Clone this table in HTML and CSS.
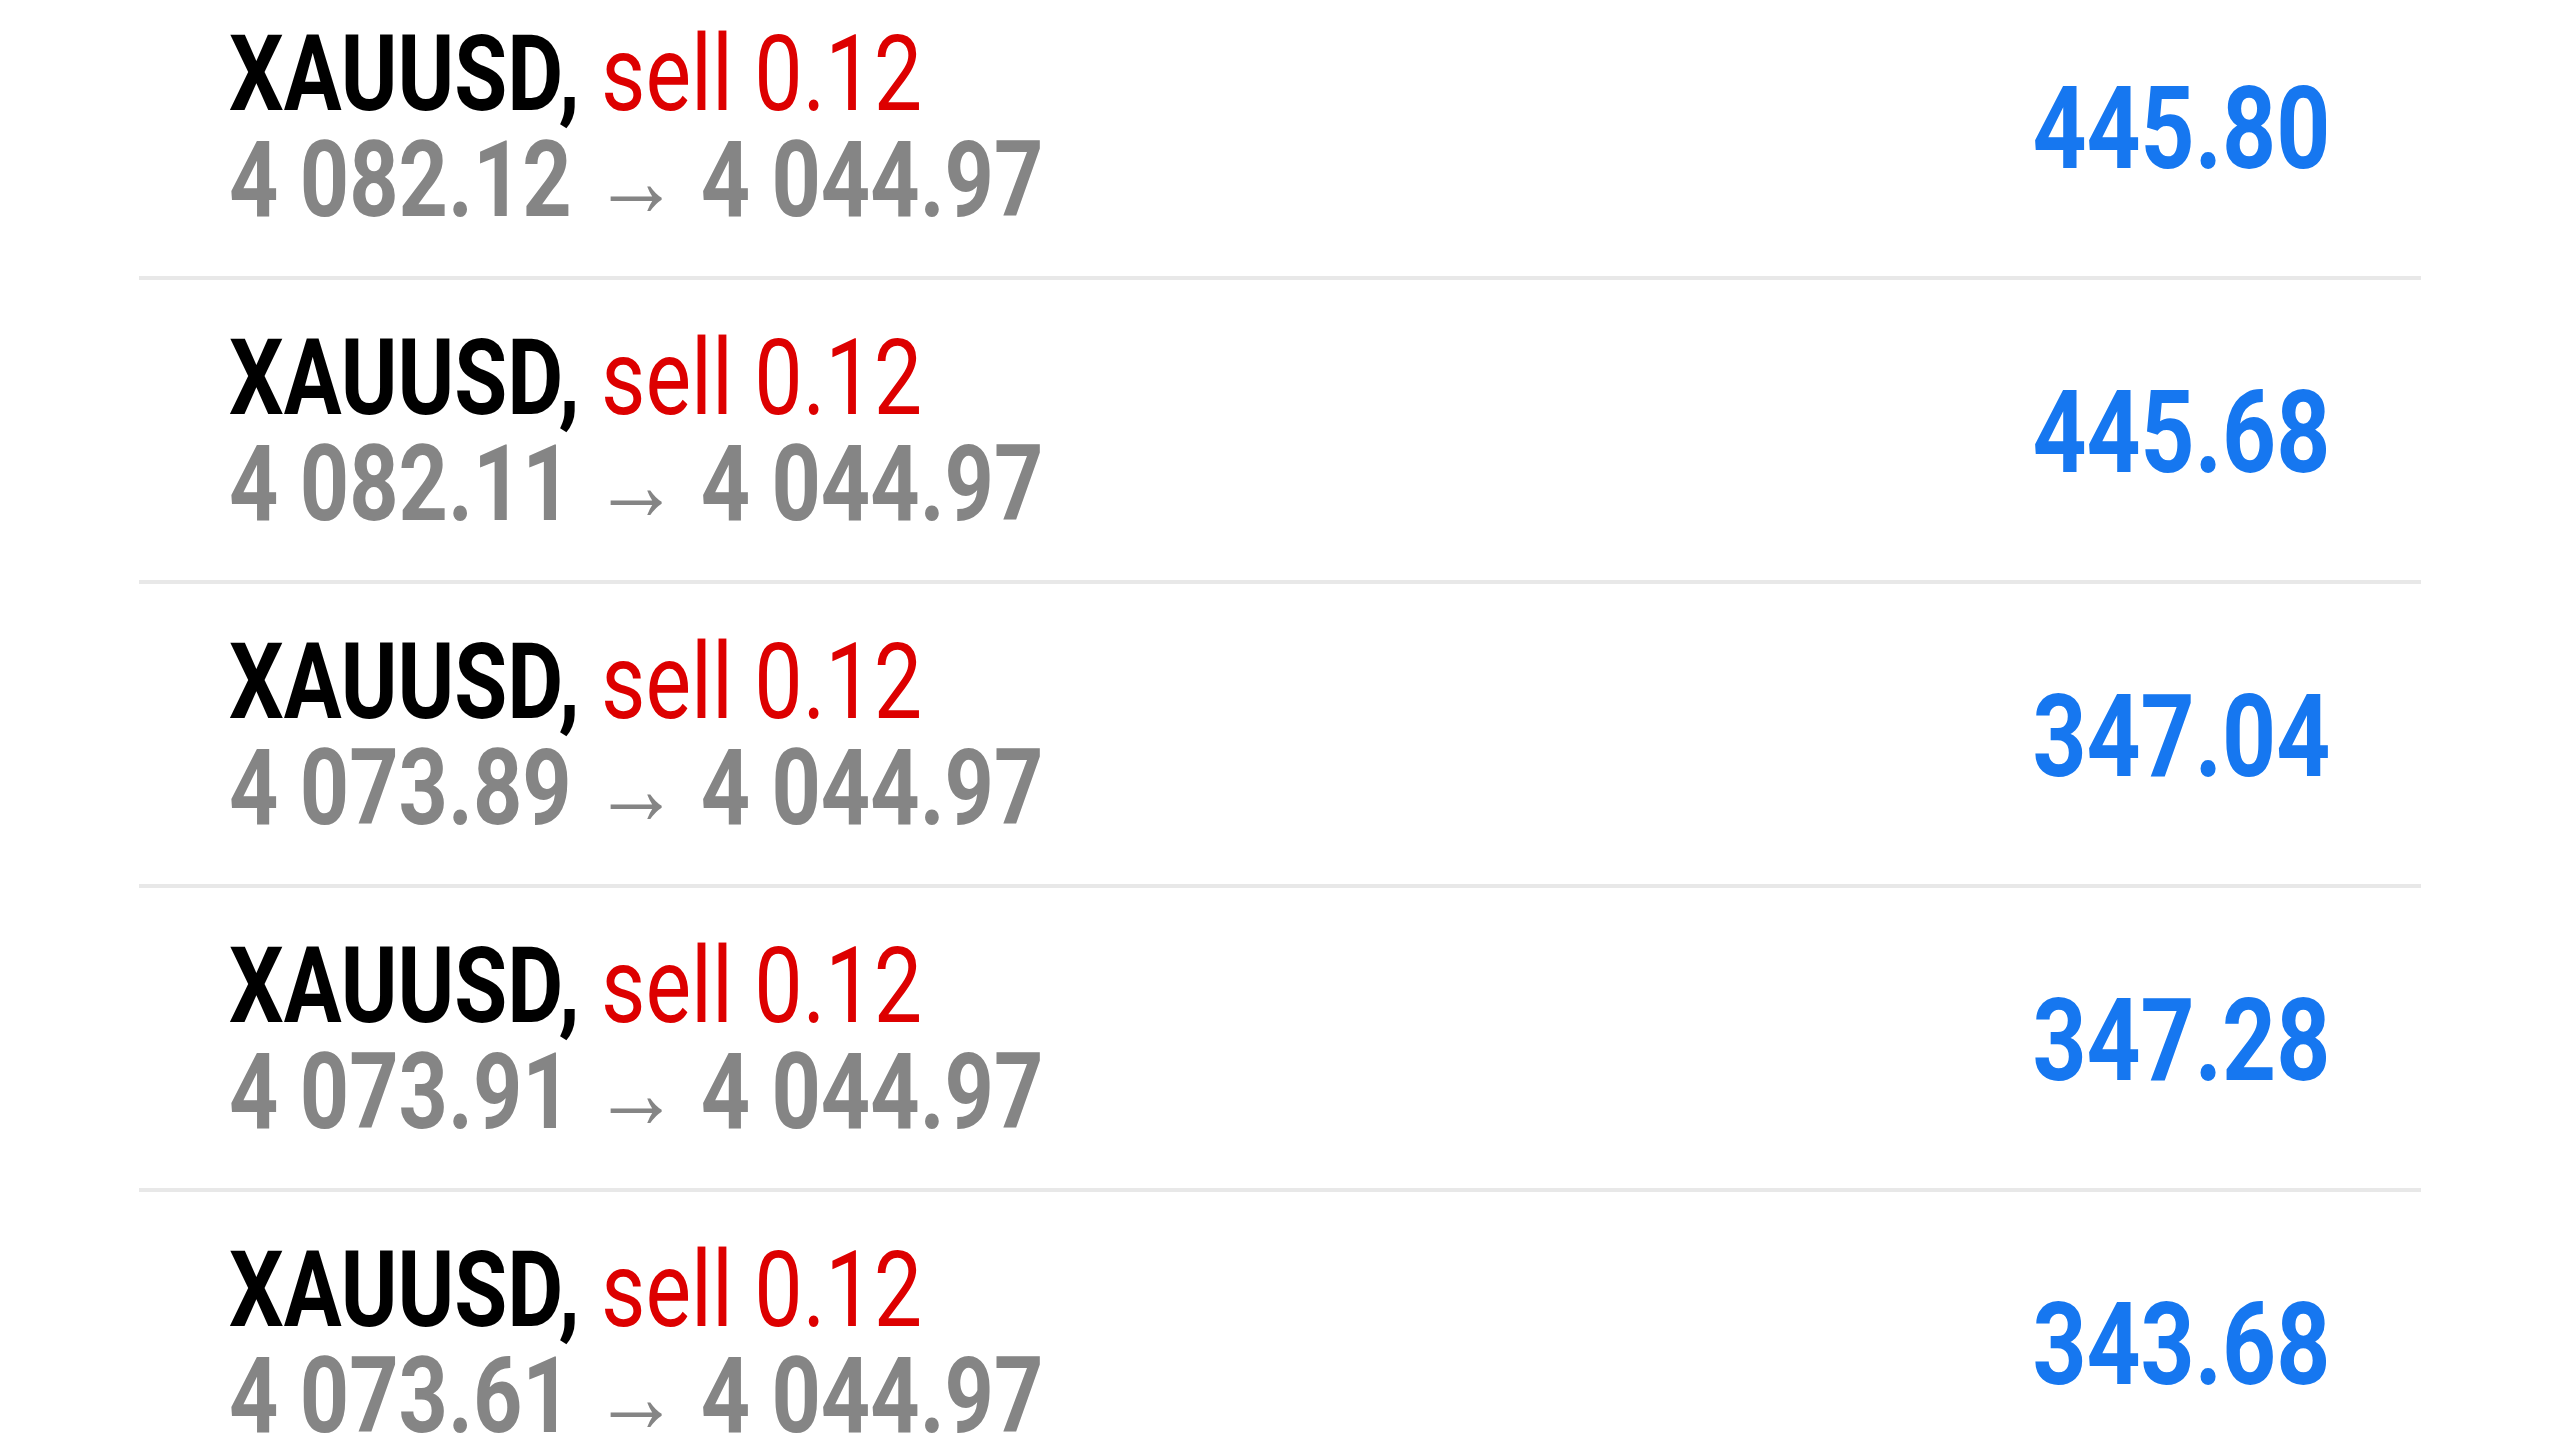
FILE: index.html
```html
<!DOCTYPE html>
<html lang="en">
  <head>
    <meta charset="UTF-8" />
    <meta name="viewport" content="width=device-width, initial-scale=1.0" />
    <title>Positions</title>
    <link rel="stylesheet" href="styles.css">
  </head>
  <body>
    <ul class="positions">
      <li class="position">
        <div class="info">
          <div class="title"><span class="symbol">XAUUSD,</span> <span class="side">sell 0.12</span></div>
          <div class="price">4 082.12 &rarr; 4 044.97</div>
        </div>
        <div class="profit">445.80</div>
      </li>
      <li class="position">
        <div class="info">
          <div class="title"><span class="symbol">XAUUSD,</span> <span class="side">sell 0.12</span></div>
          <div class="price">4 082.11 &rarr; 4 044.97</div>
        </div>
        <div class="profit">445.68</div>
      </li>
      <li class="position">
        <div class="info">
          <div class="title"><span class="symbol">XAUUSD,</span> <span class="side">sell 0.12</span></div>
          <div class="price">4 073.89 &rarr; 4 044.97</div>
        </div>
        <div class="profit">347.04</div>
      </li>
      <li class="position">
        <div class="info">
          <div class="title"><span class="symbol">XAUUSD,</span> <span class="side">sell 0.12</span></div>
          <div class="price">4 073.91 &rarr; 4 044.97</div>
        </div>
        <div class="profit">347.28</div>
      </li>
      <li class="position">
        <div class="info">
          <div class="title"><span class="symbol">XAUUSD,</span> <span class="side">sell 0.12</span></div>
          <div class="price">4 073.61 &rarr; 4 044.97</div>
        </div>
        <div class="profit">343.68</div>
      </li>
    </ul>
  </body>
</html>
```

FILE: styles.css
```css
/* General reset */
* {
  margin: 0;
  padding: 0;
  box-sizing: border-box;
}

body {
  background: #ffffff;
  font-family: Roboto, "Liberation Sans", sans-serif;
  overflow: hidden;
  height: 100vh;
}

/* Position list */
.positions {
  list-style: none;
  margin: -24px 139px 0;
}

.position {
  display: flex;
  align-items: center;
  justify-content: space-between;
  height: 304px;
  padding: 46px 91px 42px 90px;
  border-bottom: 4px solid #e8e8e8;
}

.info {
  display: flex;
  flex-direction: column;
}

.title,
.price {
  font-size: 105px;
  line-height: 106px;
  white-space: nowrap;
  transform: scaleX(0.82);
  transform-origin: left center;
}

.symbol {
  font-weight: 700;
  color: #000000;
}

.side {
  color: #dd0000;
}

.price {
  font-weight: 700;
  color: #858585;
}

/* Profit on the right */
.profit {
  font-size: 115px;
  line-height: 115px;
  font-weight: 700;
  color: #1677f0;
  transform: scaleX(0.82);
  transform-origin: right center;
}
```
